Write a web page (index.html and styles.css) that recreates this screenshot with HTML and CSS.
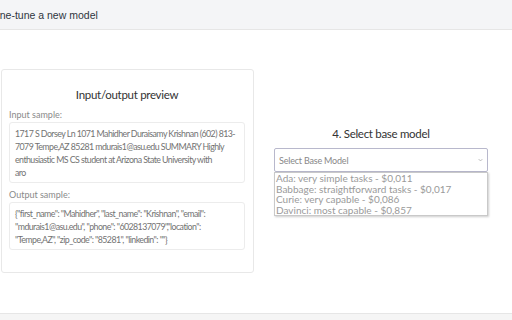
FILE: index.html
```html
<!DOCTYPE html>
<html lang="en">
<head>
    <meta charset="UTF-8">
    <meta name="viewport" content="width=device-width, initial-scale=1.0">
    <title>Fine-tune a new model</title>
    <link rel="stylesheet" href="styles.css">
</head>
<body>
    <div class="topbar">
        <div class="page-title">Fine-tune a new model</div>
    </div>

    <div class="main">
        <div class="preview-card">
            <h2>Input/output preview</h2>
            <div class="field-label">Input sample:</div>
            <div class="sample-box">1717 S Dorsey Ln 1071 Mahidher Duraisamy Krishnan (602) 813-7079 Tempe,AZ 85281 mdurais1@asu.edu SUMMARY Highly enthusiastic MS CS student at Arizona State University with<br>aro</div>
            <div class="field-label">Output sample:</div>
            <div class="sample-box">{"first_name": "Mahidher", "last_name": "Krishnan", "email": "mdurais1@asu.edu", "phone": "6028137079","location": "Tempe,AZ", "zip_code": "85281", "linkedin": ""}</div>
        </div>

        <div class="model-col">
            <h3>4. Select base model</h3>
            <div class="select-wrap">
                <div class="select-box">
                    <span>Select Base Model</span>
                    <svg viewBox="0 0 8 5" class="chevron"><path d="M1 1l3 3 3-3" fill="none" stroke="#999" stroke-width="1"/></svg>
                </div>
                <ul class="select-options">
                    <li>Ada: very simple tasks - $0,011</li>
                    <li>Babbage: straightforward tasks - $0,017</li>
                    <li>Curie: very capable - $0,086</li>
                    <li>Davinci: most capable - $0,857</li>
                </ul>
            </div>
        </div>
    </div>

    <div class="bottombar"></div>
</body>
</html>
```

FILE: styles.css
```css
body {
    margin: 0;
    font-family: Lato, "Liberation Sans", sans-serif;
    background-color: #fff;
    width: 512px;
    height: 320px;
    overflow: hidden;
    display: flex;
    flex-direction: column;
}
.topbar {
    height: 29px;
    background-color: #f4f5f7;
    border-bottom: 1px solid #e6e6e6;
    display: flex;
    align-items: center;
}
.page-title {
    margin-left: -9px;
    font-family: "Liberation Sans", sans-serif;
    font-size: 10.5px;
    color: #2f3540;
}
.main {
    flex: 1;
    display: flex;
    align-items: flex-start;
    gap: 20px;
    padding: 39px 0 0 1px;
}
.preview-card {
    width: 236px;
    height: 186px;
    padding: 8px 8px 8px 7px;
    border: 1px solid #e8e8e8;
    border-radius: 3px;
}
.preview-card h2 {
    margin: 10px 0 8px;
    text-align: center;
    font-size: 11.5px;
    letter-spacing: -0.3px;
    font-weight: 400;
    color: #333;
}
.field-label {
    font-size: 9px;
    color: #8a8a8a;
    margin: 0 0 2px;
}
.sample-box {
    border: 1px solid #ececec;
    border-radius: 3px;
    padding: 4px 5px 3px;
    font-size: 8.8px;
    line-height: 13px;
    letter-spacing: -0.55px;
    color: #727272;
    margin-bottom: 6px;
}
.model-col {
    width: 214px;
    padding-top: 58px;
}
.model-col h3 {
    margin: 0 0 8px;
    text-align: center;
    font-size: 11.5px;
    letter-spacing: -0.3px;
    font-weight: 400;
    color: #333;
}
.select-wrap {
    position: relative;
}
.select-box {
    height: 22px;
    border: 1px solid #b8b8cc;
    border-radius: 2px;
    display: flex;
    align-items: center;
    justify-content: space-between;
    padding: 0 4px;
    font-size: 9px;
    letter-spacing: -0.2px;
    color: #888;
}
.chevron {
    width: 5px;
    height: 4px;
}
.select-options {
    position: absolute;
    top: 24px;
    left: 0;
    right: 0;
    margin: 0;
    padding: 0 1px;
    list-style: none;
    background-color: #fff;
    border: 1px solid #c9c9c9;
    box-shadow: 1px 1px 2px rgba(0, 0, 0, 0.2);
}
.select-options li {
    font-size: 10px;
    line-height: 10.5px;
    color: #9a9a9a;
}
.bottombar {
    height: 6px;
    background-color: #f5f5f5;
    border-top: 1px solid #e6e6e6;
}
```
